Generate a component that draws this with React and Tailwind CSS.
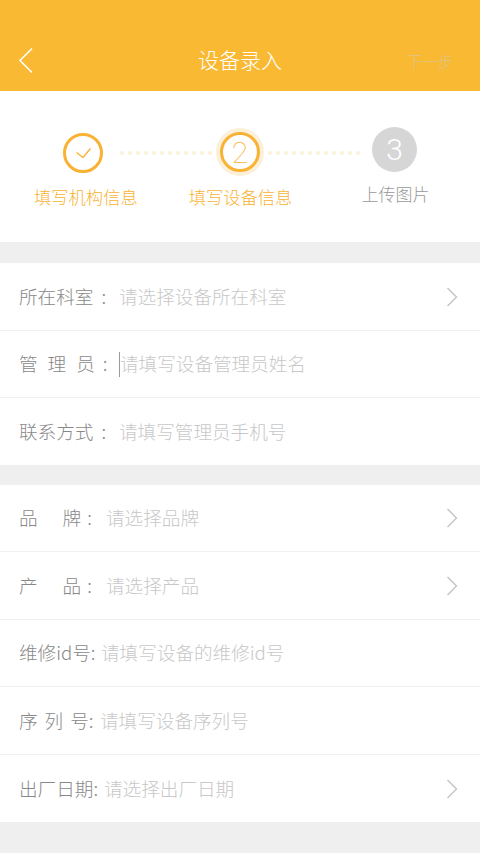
const FONT = "font-['Noto_Sans_CJK_SC','Liberation_Sans',sans-serif]"

function Chevron() {
  return (
    <svg className="ml-auto mr-[22px] h-5 w-3 shrink-0" viewBox="0 0 12 20" fill="none" stroke="#c6c6c6" strokeWidth="1.5">
      <path d="M1.5 1 L10.5 10 L1.5 19" />
    </svg>
  )
}

function Dots() {
  return (
    <div className="mt-[24px] flex gap-1">
      {Array.from({ length: 12 }).map((_, i) => (
        <span key={i} className="h-1 w-1 rounded-full bg-[#fdf0d8]" />
      ))}
    </div>
  )
}

function Row({ label, hint, arrow, cursor, last, tall, boxClass, colonClass = 'ml-0' }) {
  return (
    <div className={`flex items-center bg-white pl-[19px] text-[18.6px] font-light ${tall ? 'h-[68px]' : 'h-[67px]'} ${last ? '' : 'border-b border-[#f0f0f0]'}`}>
      <div className={`flex shrink-0 items-center pb-[2px] text-[#888888] ${boxClass}`}>
        {label}
        <span className={colonClass}>:</span>
      </div>
      {cursor && <span className="h-[25px] w-px bg-[#9a9a9a]" />}
      <span className="pb-[2px] text-[#c8c8c8]">{hint}</span>
      {arrow && <Chevron />}
    </div>
  )
}

export default function App() {
  return (
    <div className={`${FONT} flex min-h-[853px] w-[480px] flex-col bg-[#efefef]`}>
      {/* header */}
      <div className="relative flex h-[91px] items-center justify-center bg-[#f9b933] pt-[29px]">
        <svg className="absolute left-[18px] top-[47px] h-[27px] w-[16px]" viewBox="0 0 16 27" fill="none" stroke="#ffffff" strokeWidth="1.6">
          <path d="M14 1.5 L2 13.5 L14 25.5" />
        </svg>
        <h1 className="text-[21px] font-light text-white">设备录入</h1>
        <span className="absolute left-[407px] top-[50px] text-[15.4px] font-light text-[#e0c488]">下一步</span>
      </div>

      {/* steps */}
      <div className="mb-[21px] h-[151px] bg-white pt-[36px]">
        <div className="flex h-[49px] items-start pl-[63px]">
          <div className="mt-[6px] flex h-10 w-10 items-center justify-center rounded-full border-[3px] border-[#f9b233]">
            <svg className="h-[10px] w-[15px]" viewBox="0 0 15 10" fill="none" stroke="#f9b233" strokeWidth="1.4">
              <path d="M0.5 4.5 L7 9.5 L14.5 0.5" />
            </svg>
          </div>
          <div className="ml-[17px]"><Dots /></div>
          <div className="ml-2 mt-[5px] flex h-10 w-10 items-center justify-center rounded-full border-[3px] border-[#f9b233] font-['Roboto'] text-[30px] font-thin text-[#f9b233] ring-4 ring-[#fdf0d8]">
            2
          </div>
          <div className="ml-2"><Dots /></div>
          <div className="ml-3 flex h-[45px] w-[45px] items-center justify-center rounded-full bg-[#d6d6d6] font-['Roboto'] text-[30px] font-light text-white">
            3
          </div>
        </div>
        <div className="mt-[6px] flex items-start pl-[34px] text-[17.3px] font-light leading-6">
          <span className="mt-[3px] text-[#f9b233]">填写机构信息</span>
          <span className="ml-[51px] mt-[3px] text-[#f9b233]">填写设备信息</span>
          <span className="ml-[69px] text-[17px] text-[#999999]">上传图片</span>
        </div>
      </div>

      {/* group one */}
      <div className="mb-5 bg-white">
        <Row label="所在科室" hint="请选择设备所在科室" arrow tall boxClass="w-[100px]" colonClass="ml-[8px]" />
        <Row
          label={<span className="flex gap-[10px]"><span>管</span><span>理</span><span>员</span></span>}
          hint="请填写设备管理员姓名"
          cursor
          boxClass="w-[100px]"
          colonClass="ml-[8px]"
        />
        <Row label="联系方式" hint="请填写管理员手机号" last boxClass="w-[100px]" colonClass="ml-[8px]" />
      </div>

      {/* group two */}
      <div className="bg-white">
        <Row
          label={<span className="flex gap-[25px]"><span>品</span><span>牌</span></span>}
          hint="请选择品牌"
          arrow
          boxClass="w-[87px]"
          colonClass="ml-[6px]"
        />
        <Row
          label={<span className="flex gap-[25px]"><span>产</span><span>品</span></span>}
          hint="请选择产品"
          arrow
          tall
          boxClass="w-[87px]"
          colonClass="ml-[6px]"
        />
        <Row label="维修id号" hint="请填写设备的维修id号" boxClass="w-[82px]" />
        <Row
          label={<span className="flex gap-[7px]"><span>序</span><span>列</span><span>号</span></span>}
          hint="请填写设备序列号"
          tall
          boxClass="w-[81px]"
        />
        <Row label="出厂日期" hint="请选择出厂日期" arrow last boxClass="w-[85px]" />
      </div>
    </div>
  )
}
